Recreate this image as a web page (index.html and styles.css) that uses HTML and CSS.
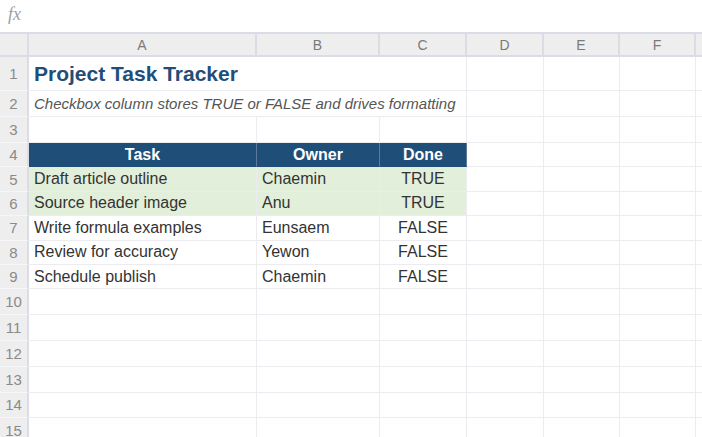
FILE: index.html
```html
<!DOCTYPE html>
<html lang="en">
<head>
    <meta charset="UTF-8">
    <meta name="viewport" content="width=device-width, initial-scale=1.0">
    <title>Project Task Tracker</title>
    <link rel="stylesheet" href="styles.css">
</head>
<body>
    <div class="formula-bar"><span class="fx">fx</span></div>

    <div class="sheet">
        <div class="row col-head">
            <div class="rh"></div>
            <div class="cell">A</div>
            <div class="cell">B</div>
            <div class="cell">C</div>
            <div class="cell">D</div>
            <div class="cell">E</div>
            <div class="cell">F</div>
            <div class="cell"></div>
        </div>

        <div class="row r-title">
            <div class="rh">1</div>
            <div class="cell title span3">Project Task Tracker</div>
            <div class="cell"></div><div class="cell"></div><div class="cell"></div><div class="cell"></div>
        </div>
        <div class="row r-note">
            <div class="rh">2</div>
            <div class="cell note span3">Checkbox column stores TRUE or FALSE and drives formatting</div>
            <div class="cell"></div><div class="cell"></div><div class="cell"></div><div class="cell"></div>
        </div>
        <div class="row r-note">
            <div class="rh">3</div>
            <div class="cell"></div><div class="cell"></div><div class="cell"></div>
            <div class="cell"></div><div class="cell"></div><div class="cell"></div><div class="cell"></div>
        </div>

        <div class="row r-data thead">
            <div class="rh">4</div>
            <div class="cell th">Task</div>
            <div class="cell th">Owner</div>
            <div class="cell th">Done</div>
            <div class="cell"></div><div class="cell"></div><div class="cell"></div><div class="cell"></div>
        </div>
        <div class="row r-data done">
            <div class="rh">5</div>
            <div class="cell">Draft article outline</div>
            <div class="cell">Chaemin</div>
            <div class="cell center">TRUE</div>
            <div class="cell"></div><div class="cell"></div><div class="cell"></div><div class="cell"></div>
        </div>
        <div class="row r-data done">
            <div class="rh">6</div>
            <div class="cell">Source header image</div>
            <div class="cell">Anu</div>
            <div class="cell center">TRUE</div>
            <div class="cell"></div><div class="cell"></div><div class="cell"></div><div class="cell"></div>
        </div>
        <div class="row r-data">
            <div class="rh">7</div>
            <div class="cell">Write formula examples</div>
            <div class="cell">Eunsaem</div>
            <div class="cell center">FALSE</div>
            <div class="cell"></div><div class="cell"></div><div class="cell"></div><div class="cell"></div>
        </div>
        <div class="row r-data">
            <div class="rh">8</div>
            <div class="cell">Review for accuracy</div>
            <div class="cell">Yewon</div>
            <div class="cell center">FALSE</div>
            <div class="cell"></div><div class="cell"></div><div class="cell"></div><div class="cell"></div>
        </div>
        <div class="row r-data">
            <div class="rh">9</div>
            <div class="cell">Schedule publish</div>
            <div class="cell">Chaemin</div>
            <div class="cell center">FALSE</div>
            <div class="cell"></div><div class="cell"></div><div class="cell"></div><div class="cell"></div>
        </div>

        <div class="row r-empty">
            <div class="rh">10</div>
            <div class="cell"></div><div class="cell"></div><div class="cell"></div><div class="cell"></div><div class="cell"></div><div class="cell"></div><div class="cell"></div>
        </div>
        <div class="row r-empty">
            <div class="rh">11</div>
            <div class="cell"></div><div class="cell"></div><div class="cell"></div><div class="cell"></div><div class="cell"></div><div class="cell"></div><div class="cell"></div>
        </div>
        <div class="row r-empty">
            <div class="rh">12</div>
            <div class="cell"></div><div class="cell"></div><div class="cell"></div><div class="cell"></div><div class="cell"></div><div class="cell"></div><div class="cell"></div>
        </div>
        <div class="row r-empty">
            <div class="rh">13</div>
            <div class="cell"></div><div class="cell"></div><div class="cell"></div><div class="cell"></div><div class="cell"></div><div class="cell"></div><div class="cell"></div>
        </div>
        <div class="row r-empty">
            <div class="rh">14</div>
            <div class="cell"></div><div class="cell"></div><div class="cell"></div><div class="cell"></div><div class="cell"></div><div class="cell"></div><div class="cell"></div>
        </div>
        <div class="row r-empty">
            <div class="rh">15</div>
            <div class="cell"></div><div class="cell"></div><div class="cell"></div><div class="cell"></div><div class="cell"></div><div class="cell"></div><div class="cell"></div>
        </div>
    </div>
</body>
</html>
```

FILE: styles.css
```css
* {
    box-sizing: border-box;
}
html, body {
    margin: 0;
    height: 100%;
    overflow: hidden;
}
body {
    font-family: "Liberation Sans", Arial, sans-serif;
    font-size: 16px;
    color: #333;
    background-color: white;
}
.formula-bar {
    height: 32px;
    padding-left: 8px;
    display: flex;
    align-items: center;
    background-color: white;
}
.fx {
    font-family: "Liberation Serif", "Times New Roman", serif;
    font-style: italic;
    font-size: 18px;
    color: #a0a0a0;
    margin-top: -4px;
}
.sheet {
    border-top: 2px solid #dcdce6;
}
.row {
    display: grid;
    grid-template-columns: 29px 228px 123px 87px 77px 76px 76px 1fr;
}
.cell {
    border-right: 1px solid #ebebf0;
    border-bottom: 1px solid #ebebf0;
    padding: 0 5px;
    display: flex;
    align-items: center;
    white-space: nowrap;
    overflow: visible;
}
.rh {
    background-color: #eeeeee;
    border-right: 2px solid #dcdce6;
    border-bottom: 1px solid #f6f6f8;
    display: flex;
    align-items: center;
    justify-content: center;
    color: #8a8a8a;
    font-size: 15px;
}
.col-head {
    height: 23px;
}
.col-head .rh {
    border-bottom: 2px solid #dcdce6;
}
.col-head .cell {
    background-color: #eeeeee;
    border-right: 2px solid #dcdce6;
    border-bottom: 2px solid #dcdce6;
    justify-content: center;
    color: #7a7a7a;
    font-size: 14px;
}
.r-title {
    height: 34px;
}
.r-note {
    height: 26px;
}
.r-data {
    height: 24.4px;
}
.r-empty {
    height: 25.8px;
}
.span3 {
    grid-column: span 3;
}
.r-title .span3,
.r-note .span3 {
    border-right: 1px solid #ebebf0;
}
.title {
    font-size: 21px;
    font-weight: bold;
    color: #1f4e79;
}
.note {
    font-style: italic;
    font-size: 15px;
    color: #555;
}
.thead .th {
    background-color: #1f4e79;
    color: white;
    font-weight: bold;
    justify-content: center;
    border-right-color: #5c7a99;
    border-bottom-color: #1f4e79;
}
.done .cell:nth-child(-n+4) {
    background-color: #e2efda;
    border-bottom-color: #e9efe6;
}
.center {
    justify-content: center;
}
```
